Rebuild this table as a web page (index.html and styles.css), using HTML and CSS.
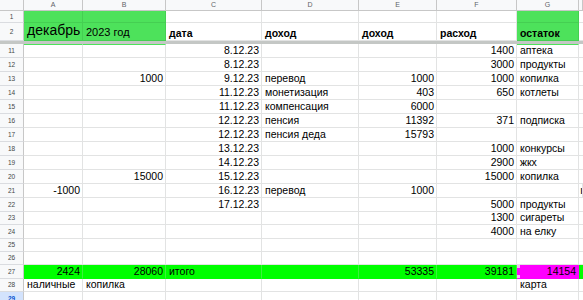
FILE: index.html
```html
<!DOCTYPE html>
<html lang="ru">
<head>
<meta charset="utf-8">
<title>Таблица</title>
<link rel="stylesheet" href="styles.css">
</head>
<body>
<div class="sheet">
  <div class="row hdr">
    <div class="c corner"></div>
    <div class="c ch">A</div><div class="c ch">B</div><div class="c ch">C</div><div class="c ch">D</div>
    <div class="c ch">E</div><div class="c ch">F</div><div class="c ch">G</div><div class="c ch"></div>
  </div>
  <div class="row h12">
    <div class="c rh">1</div>
    <div class="c g"></div><div class="c g"></div><div class="c"></div><div class="c"></div>
    <div class="c"></div><div class="c"></div><div class="c g"></div><div class="c"></div>
  </div>
  <div class="row h18">
    <div class="c rh">2</div>
    <div class="c g big">декабрь</div><div class="c g mid">2023 год</div><div class="c b">дата</div><div class="c b">доход</div>
    <div class="c b">доход</div><div class="c b">расход</div><div class="c g b">остаток</div><div class="c"></div>
  </div>
  <div class="freeze"></div>
  <div class="row h14 first">
    <div class="c rh">11</div>
    <div class="c gt"></div><div class="c gt"></div><div class="c n">8.12.23</div><div class="c"></div>
    <div class="c"></div><div class="c n">1400</div><div class="c gt">аптека</div><div class="c"></div>
  </div>
  <div class="row h14">
    <div class="c rh">12</div>
    <div class="c"></div><div class="c"></div><div class="c n">8.12.23</div><div class="c"></div>
    <div class="c"></div><div class="c n">3000</div><div class="c">продукты</div><div class="c"></div>
  </div>
  <div class="row h14">
    <div class="c rh">13</div>
    <div class="c"></div><div class="c n">1000</div><div class="c n">9.12.23</div><div class="c">перевод</div>
    <div class="c n">1000</div><div class="c n">1000</div><div class="c">копилка</div><div class="c"></div>
  </div>
  <div class="row h14">
    <div class="c rh">14</div>
    <div class="c"></div><div class="c"></div><div class="c n">11.12.23</div><div class="c">монетизация</div>
    <div class="c n">403</div><div class="c n">650</div><div class="c">котлеты</div><div class="c"></div>
  </div>
  <div class="row h14">
    <div class="c rh">15</div>
    <div class="c"></div><div class="c"></div><div class="c n">11.12.23</div><div class="c">компенсация</div>
    <div class="c n">6000</div><div class="c"></div><div class="c"></div><div class="c"></div>
  </div>
  <div class="row h14">
    <div class="c rh">16</div>
    <div class="c"></div><div class="c"></div><div class="c n">12.12.23</div><div class="c">пенсия</div>
    <div class="c n">11392</div><div class="c n">371</div><div class="c">подписка</div><div class="c"></div>
  </div>
  <div class="row h14">
    <div class="c rh">17</div>
    <div class="c"></div><div class="c"></div><div class="c n">12.12.23</div><div class="c">пенсия деда</div>
    <div class="c n">15793</div><div class="c"></div><div class="c"></div><div class="c"></div>
  </div>
  <div class="row h14">
    <div class="c rh">18</div>
    <div class="c"></div><div class="c"></div><div class="c n">13.12.23</div><div class="c"></div>
    <div class="c"></div><div class="c n">1000</div><div class="c">конкурсы</div><div class="c"></div>
  </div>
  <div class="row h14">
    <div class="c rh">19</div>
    <div class="c"></div><div class="c"></div><div class="c n">14.12.23</div><div class="c"></div>
    <div class="c"></div><div class="c n">2900</div><div class="c">жкх</div><div class="c"></div>
  </div>
  <div class="row h14">
    <div class="c rh">20</div>
    <div class="c"></div><div class="c n">15000</div><div class="c n">15.12.23</div><div class="c"></div>
    <div class="c"></div><div class="c n">15000</div><div class="c">копилка</div><div class="c"></div>
  </div>
  <div class="row h14">
    <div class="c rh">21</div>
    <div class="c n">-1000</div><div class="c"></div><div class="c n">16.12.23</div><div class="c">перевод</div>
    <div class="c n">1000</div><div class="c"></div><div class="c"></div><div class="c edge">ı</div>
  </div>
  <div class="row h14">
    <div class="c rh">22</div>
    <div class="c"></div><div class="c"></div><div class="c n">17.12.23</div><div class="c"></div>
    <div class="c"></div><div class="c n">5000</div><div class="c">продукты</div><div class="c"></div>
  </div>
  <div class="row h13">
    <div class="c rh">23</div>
    <div class="c"></div><div class="c"></div><div class="c"></div><div class="c"></div>
    <div class="c"></div><div class="c n">1300</div><div class="c">сигареты</div><div class="c"></div>
  </div>
  <div class="row h14">
    <div class="c rh">24</div>
    <div class="c"></div><div class="c"></div><div class="c"></div><div class="c"></div>
    <div class="c"></div><div class="c n">4000</div><div class="c">на елку</div><div class="c"></div>
  </div>
  <div class="row h13">
    <div class="c rh">25</div>
    <div class="c"></div><div class="c"></div><div class="c"></div><div class="c"></div>
    <div class="c"></div><div class="c"></div><div class="c"></div><div class="c"></div>
  </div>
  <div class="row h13">
    <div class="c rh">26</div>
    <div class="c"></div><div class="c"></div><div class="c"></div><div class="c"></div>
    <div class="c"></div><div class="c"></div><div class="c"></div><div class="c"></div>
  </div>
  <div class="row h14 total">
    <div class="c rh">27</div>
    <div class="c n lg">2424</div><div class="c n lg">28060</div><div class="c lg">итого</div><div class="c lg"></div>
    <div class="c n lg">53335</div><div class="c n lg">39181</div><div class="c n mg">14154</div><div class="c lg"></div>
  </div>
  <div class="row h13">
    <div class="c rh">28</div>
    <div class="c">наличные</div><div class="c">копилка</div><div class="c"></div><div class="c"></div>
    <div class="c"></div><div class="c"></div><div class="c">карта</div><div class="c"></div>
  </div>
  <div class="row h14">
    <div class="c rh sel">29</div>
    <div class="c"></div><div class="c"></div><div class="c"></div><div class="c"></div>
    <div class="c"></div><div class="c"></div><div class="c"></div><div class="c"></div>
  </div>
</div>
</body>
</html>
```

FILE: styles.css
```css
html, body {
  margin: 0;
  padding: 0;
  background: #ffffff;
  overflow: hidden;
}

.sheet {
  width: 583px;
  height: 300px;
  overflow: hidden;
  font-family: "Liberation Sans", Arial, sans-serif;
  font-size: 10.5px;
  color: #000000;
}

.row {
  display: grid;
  grid-template-columns: 24px 59px 83px 96px 97px 78px 80px 62px 1fr;
}

.hdr { height: 11px; }
.h12 { height: 12px; }
.h18 { height: 18px; }
.h14 { height: 14px; }
.h13 { height: 13px; }

.c {
  box-sizing: border-box;
  border-right: 1px solid #e2e3e3;
  border-bottom: 1px solid #e2e3e3;
  display: flex;
  align-items: flex-end;
  padding: 0 3px 1px 3px;
  line-height: 12px;
  white-space: nowrap;
  overflow: hidden;
  min-width: 0;
}

.n { justify-content: flex-end; padding-right: 2px; }
.b { font-weight: bold; }
.edge { padding-left: 1px; padding-right: 0; }

.corner, .ch {
  background: #f8f9fa;
  border-right: 1px solid #c7c7c7;
  border-bottom: 1px solid #c7c7c7;
}

.ch {
  font-size: 7px;
  color: #5f6368;
  justify-content: center;
  align-items: center;
  padding: 0;
  line-height: 10px;
}

.rh {
  background: #f8f9fa;
  border-right: 1px solid #c7c7c7;
  border-bottom: 1px solid #dadce0;
  font-size: 6.5px;
  color: #444746;
  justify-content: center;
  align-items: center;
  padding: 0;
  line-height: 8px;
}

.rh.sel {
  background: #d3e3fd;
  color: #0b57d0;
  font-weight: bold;
}

.g {
  background: #4de25b;
  border-right-color: #45cf52;
  border-bottom-color: #45cf52;
}

.gt { border-top: 1px solid #4de25b; }

.big {
  font-size: 14px;
  line-height: 16px;
  padding-bottom: 2px;
}

.mid {
  font-size: 11px;
  line-height: 14px;
  padding-bottom: 1px;
}

.freeze {
  height: 3px;
  background: #c4c7c5;
}

.lg {
  background: #00ff00;
  border-right-color: #3cf23c;
  border-bottom-color: #00ff00;
}

.mg {
  background: #ff00ff;
  border-right-color: #ff00ff;
  border-bottom-color: #ff00ff;
  position: relative;
}

.mg::before, .mg::after {
  content: "";
  position: absolute;
  width: 3px;
  height: 3px;
  background: #f7b7f7;
  left: 0;
}
.mg::before { top: 0; }
.mg::after { bottom: 0; }
```
